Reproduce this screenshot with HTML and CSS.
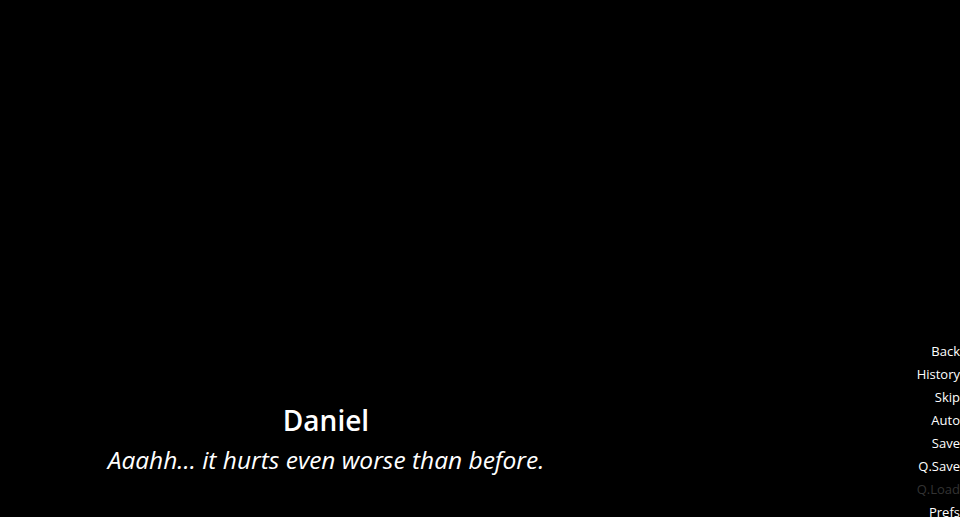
FILE: index.html
```html
<!DOCTYPE html>
<html>
<head>
<meta charset="utf-8">
<link rel="stylesheet" href="styles.css">
</head>
<body>
<div class="screen">
  <div class="dialogue">
    <div class="name">Daniel</div>
    <div class="say">Aaahh... it hurts even worse than before.</div>
  </div>
  <nav class="quick">
    <div class="item">Back</div>
    <div class="item">History</div>
    <div class="item">Skip</div>
    <div class="item">Auto</div>
    <div class="item">Save</div>
    <div class="item">Q.Save</div>
    <div class="item off">Q.Load</div>
    <div class="item">Prefs</div>
  </nav>
</div>
</body>
</html>
```

FILE: styles.css
```css
html, body {
  margin: 0;
  padding: 0;
  background: #000;
  overflow: hidden;
}
.screen {
  width: 960px;
  height: 517px;
  display: flex;
  justify-content: space-between;
  font-family: "Open Sans", sans-serif;
  color: #fff;
  overflow: hidden;
}
.dialogue {
  width: 652px;
  padding-top: 400px;
  display: flex;
  flex-direction: column;
  align-items: center;
}
.name {
  font-size: 28px;
  font-weight: 600;
  line-height: 40px;
}
.say {
  margin-top: 4px;
  font-size: 24.5px;
  font-style: italic;
  line-height: 32px;
}
.quick {
  padding-top: 340px;
  display: flex;
  flex-direction: column;
  align-items: flex-end;
}
.item {
  font-size: 13px;
  line-height: 23px;
  color: #fff;
}
.item.off {
  color: #333;
}
```
